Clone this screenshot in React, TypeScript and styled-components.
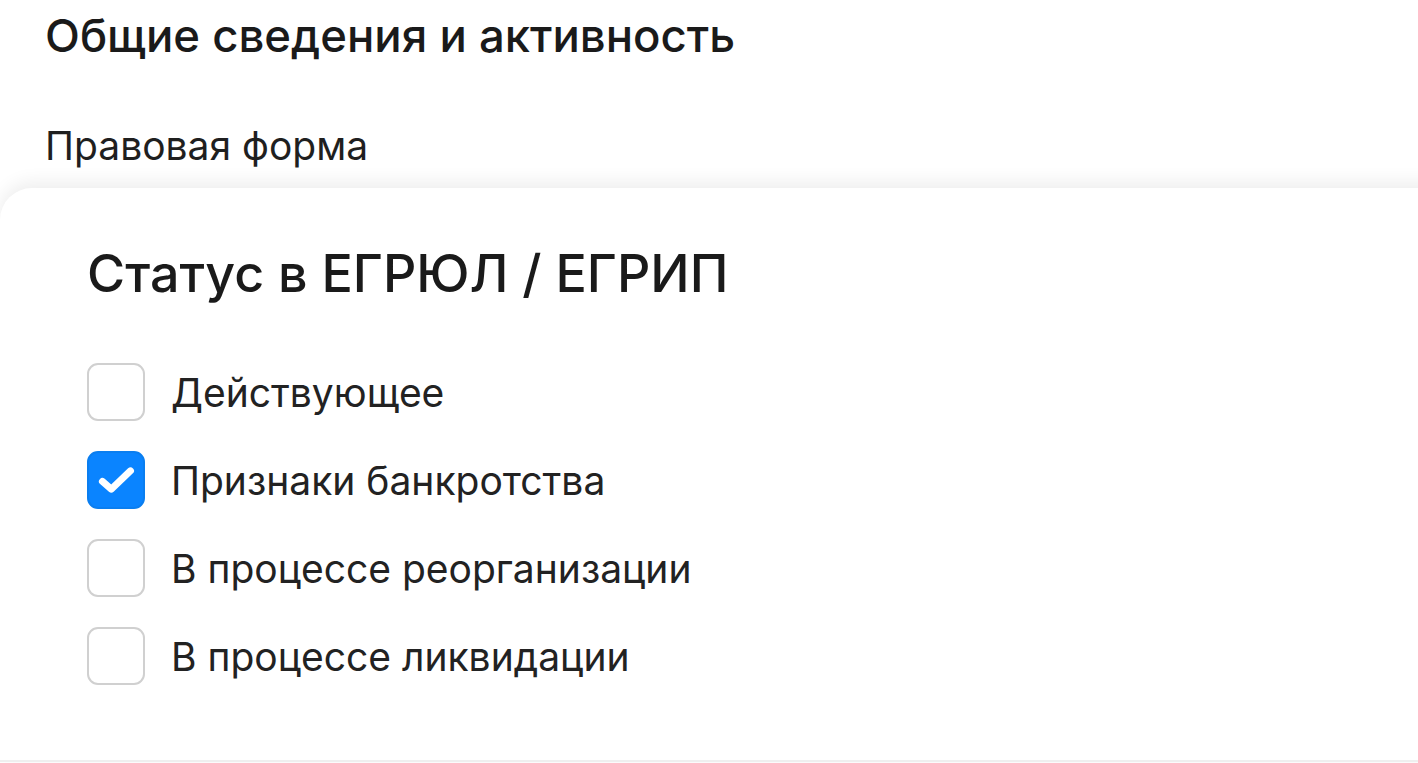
import React, { useState } from 'react';
import styled, { createGlobalStyle } from 'styled-components';

const GlobalStyle = createGlobalStyle`
	html, body {
		margin: 0;
		padding: 0;
		background: #ffffff;
		overflow-x: hidden;
	}
	body {
		font-family: Inter, 'Noto Sans', sans-serif;
		color: #1f1f1f;
	}
`;

const Page = styled.div`
	display: flex;
	flex-direction: column;
	min-height: 763px;
`;

const Section = styled.div`
	display: flex;
	flex-direction: column;
	padding: 8px 45px 0;
`;

const SectionTitle = styled.h2`
	margin: 0;
	font-size: 45.5px;
	line-height: 56px;
	font-weight: 500;
	color: #1a1a1a;
`;

const FieldLabel = styled.div`
	margin-top: 58px;
	font-size: 39px;
	line-height: 47px;
	font-weight: 400;
	color: #1f1f1f;
`;

const Sheet = styled.div`
	margin-top: 19px;
	width: calc(100% + 60px);
	box-sizing: border-box;
	padding: 55px 87px 75px;
	background: #ffffff;
	border-radius: 32px 32px 0 0;
	box-shadow: 0 -6px 18px rgba(0, 0, 0, 0.07);
	border-bottom: 2px solid #efefef;
	display: flex;
	flex-direction: column;
`;

const SheetTitle = styled.h3`
	margin: 0;
	font-size: 52px;
	line-height: 62px;
	font-weight: 500;
	color: #1a1a1a;
`;

const OptionList = styled.div`
	margin-top: 58px;
	display: flex;
	flex-direction: column;
	gap: 30px;
`;

const OptionRow = styled.label`
	display: flex;
	align-items: center;
	gap: 26px;
	height: 58px;
	cursor: pointer;
`;

const Box = styled.span<{ $checked: boolean }>`
	flex: none;
	width: 58px;
	height: 58px;
	box-sizing: border-box;
	border-radius: 11px;
	border: 2px solid ${(p) => (p.$checked ? '#0a7ef0' : '#d0d0d0')};
	background: ${(p) => (p.$checked ? '#0a84ff' : '#ffffff')};
	display: flex;
	align-items: center;
	justify-content: center;
`;

const OptionText = styled.span`
	font-size: 39px;
	line-height: 47px;
	color: #222222;
`;

const options = [
	'Действующее',
	'Признаки банкротства',
	'В процессе реорганизации',
	'В процессе ликвидации',
];

const Check = () => (
	<svg width="44" height="44" viewBox="0 0 24 24" fill="none">
		<path
			d="M4.6 12.8L9.4 17L19.9 7"
			stroke="#ffffff"
			strokeWidth="3.8"
			strokeLinecap="round"
			strokeLinejoin="round"
		/>
	</svg>
);

export default function App() {
	const [checked, setChecked] = useState<Record<string, boolean>>({
		'Признаки банкротства': true,
	});

	return (
		<Page>
			<GlobalStyle />
			<Section>
				<SectionTitle>Общие сведения и активность</SectionTitle>
				<FieldLabel>Правовая форма</FieldLabel>
			</Section>
			<Sheet>
				<SheetTitle>Статус в ЕГРЮЛ / ЕГРИП</SheetTitle>
				<OptionList>
					{options.map((o) => (
						<OptionRow
							key={o}
							onClick={() => setChecked((prev) => ({ ...prev, [o]: !prev[o] }))}>
							<Box $checked={!!checked[o]}>{checked[o] && <Check />}</Box>
							<OptionText>{o}</OptionText>
						</OptionRow>
					))}
				</OptionList>
			</Sheet>
		</Page>
	);
}
